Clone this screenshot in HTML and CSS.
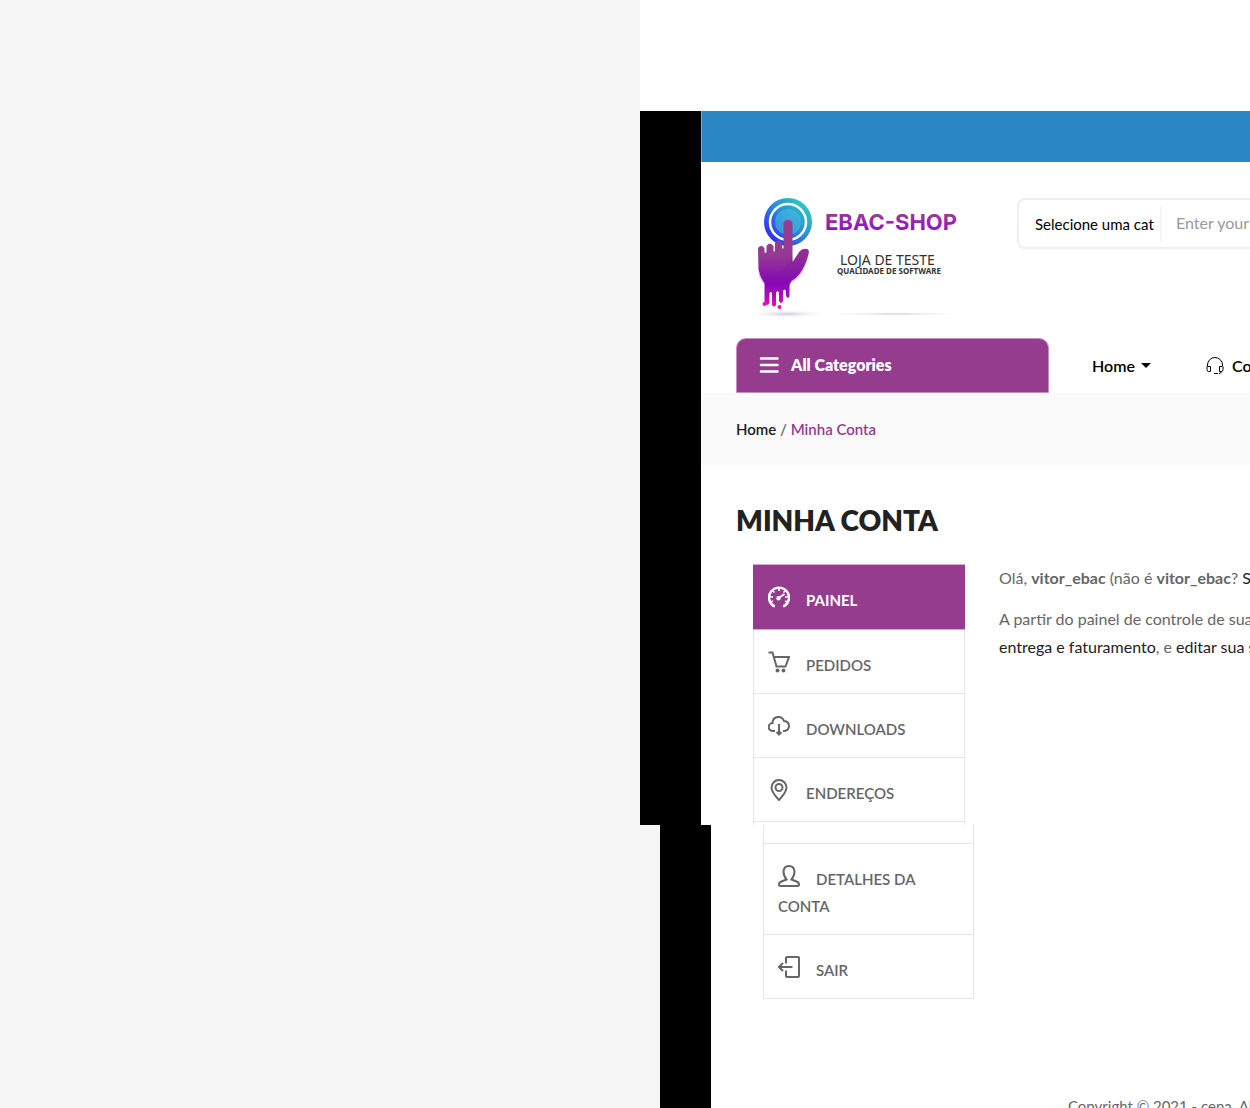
FILE: index.html
```html
<!DOCTYPE html>
<html lang="pt-BR">
<head>
<meta charset="utf-8">
<meta name="viewport" content="width=device-width, initial-scale=1">
<title>Minha Conta - EBAC Shop</title>
<link rel="stylesheet" href="styles.css">
</head>
<body>
<div class="page">
  <section class="band band-upper">
    <div class="shop">
      <div class="topbar"></div>
      <header class="header">
        <a class="logo" href="#" aria-label="EBAC-SHOP">
          <svg width="224" height="130" viewBox="0 0 224 130">
            <defs>
              <linearGradient id="ring" x1="1" y1="0" x2="0" y2="1"><stop offset="0" stop-color="#2fe0b8"/><stop offset=".5" stop-color="#2a86dc"/><stop offset="1" stop-color="#3a08ff"/></linearGradient>
              <linearGradient id="hand" x1="0" y1="25" x2="0" y2="113" gradientUnits="userSpaceOnUse"><stop offset="0" stop-color="#963c90"/><stop offset=".4" stop-color="#943a92"/><stop offset=".72" stop-color="#8a06bb"/><stop offset=".85" stop-color="#a50fbc"/><stop offset="1" stop-color="#ef0fae"/></linearGradient>
              <linearGradient id="word" x1="0" y1="0" x2="0" y2="1"><stop offset=".2" stop-color="#963e90"/><stop offset=".8" stop-color="#9a0cd0"/></linearGradient>
              <radialGradient id="shade"><stop offset="0" stop-color="#c9c9e0"/><stop offset="1" stop-color="#fff" stop-opacity="0"/></radialGradient>
            </defs>
            <ellipse cx="42" cy="119" rx="42" ry="4" fill="url(#shade)"/>
            <ellipse cx="150" cy="119" rx="74" ry="2" fill="url(#shade)"/>
            <circle cx="43" cy="27" r="24" fill="url(#ring)"/>
            <circle cx="43" cy="27" r="18" fill="none" stroke="#fff" stroke-width="2.500"/>
            <circle cx="43" cy="27" r="13" fill="#46bcdc" opacity=".6"/>
            <path fill="url(#hand)" d="M13 53q3-4 6.500 0v4q1 2 2 0v-6q3-5 7 0v5q1 1 1.500 0v-8q3.500-5 7 0v5q1 1 1.500 0V29q0-4 4.500-4t4.500 4v38l6-9q3-5 9-4 2 1 1 5-3 12-9 20-4 5-8 7-2 2-2 6v9q-1.500 4-3.500 0v-5q-1.500-3-3 0v10q-2 4-4 0v-8q-1.500-4-3 0v12q-2 3-4 0v-12q-1.500-2-2.500 0v10q-3 4-5 0V88q-4-5-6-13z"/>
            <path d="M47 60q-2 10-11 16-9 5-23 2 1 5 5 10 11 5 26 2l3-3q6-2 11-11 5-9 6-20-4-4-10 2l-6 9z" fill="#7b129a" opacity=".25"/>
            <circle cx="19.500" cy="109" r="2" fill="#ef0fae"/><circle cx="34.500" cy="112" r="2" fill="#ef0fae"/>
            <text class="logo-name" x="80" y="35" fill="url(#word)">EBAC-SHOP</text>
            <text class="logo-line" x="95" y="70">LOJA DE TESTE</text>
            <text class="logo-sub" x="92" y="79">QUALIDADE DE SOFTWARE</text>
          </svg>
        </a>
        <form class="search">
          <select class="search-category" aria-label="Categoria"><option>Selecione uma cat</option></select>
          <input class="search-text" type="text" placeholder="Enter your search" aria-label="Busca">
        </form>
      </header>
      <nav class="nav">
        <button class="categories" type="button">
          <svg width="20" height="16" viewBox="0 0 20 16" stroke="#fff" stroke-width="2.500" stroke-linecap="round"><path d="M2 1.500h16.500M2 8h16.500M2 14.500h16.500"/></svg>
          All Categories
        </button>
        <a class="nav-link" href="#">Home <span class="caret"></span></a>
        <a class="nav-link nav-contact" href="#">
          <svg width="18" height="18" viewBox="0 0 18 18" fill="none" stroke="#000"><path d="M1.500 9V8a7 7 0 0 1 15 0v1M1.500 9.500h3v5h-2q-1.500 0-1.500-2v-3zM16.500 9.500h-3v5h2q1.500 0 1.500-2v-3M15.500 14.500q-.5 2-2.500 2M8 16.500h4"/></svg>
          Contact
        </a>
      </nav>
      <div class="breadcrumb"><a href="#">Home</a> / <span class="current">Minha Conta</span></div>
      <main class="account">
        <h1>MINHA CONTA</h1>
        <div class="columns">
          <ul class="menu menu-upper">
            <li><a class="active" href="#"><svg class="icon" viewBox="0 0 22 22"><path d="M7 20H5.500A10 10 0 1 1 16.500 20H15" stroke-width="2.400"/><path d="M11 2v3M5 5l1.500 1.500M2 11h3M17 5l-1.500 1.500M20 11h-3M3 16l2-1M19 16l-2-1" stroke-width="1.600"/><path d="M10.500 12l6-4"/><circle cx="10.500" cy="12.200" r="1.200"/></svg>PAINEL</a></li>
            <li><a href="#"><svg class="icon" viewBox="0 0 22 22"><path d="M.5 1.500h4l4 14h9L21 6H6"/><circle cx="9.500" cy="19.500" r="1"/><circle cx="15.500" cy="19.500" r="1"/></svg>PEDIDOS</a></li>
            <li><a href="#"><svg class="icon" viewBox="0 0 22 22"><path d="M7 16H5a4 4 0 0 1-.5-8q0-5 5-6 5-.5 6.500 4 5 .5 5 5t-5 5h-1M11 9v10M8.500 17l2.500 2.500 2.500-2.500"/></svg>DOWNLOADS</a></li>
            <li><a href="#"><svg class="icon" viewBox="0 0 22 22"><path d="M11 21Q3.500 13 3.500 8.500a7.500 7.500 0 0 1 15 0Q18.500 13 11 21z"/><circle cx="11" cy="8.500" r="3.500"/></svg>ENDEREÇOS</a></li>
          </ul>
          <div class="welcome">
            <p>Olá, <strong>vitor_ebac</strong> (não é <strong>vitor_ebac</strong>? <a href="#">Sair</a>)</p>
            <p>A partir do painel de controle de sua conta<br><a href="#">entrega e faturamento</a>, e <a href="#">editar sua senha</a></p>
          </div>
        </div>
      </main>
    </div>
  </section>
  <section class="band band-lower">
    <div class="shop">
      <ul class="menu menu-lower">
        <li><a href="#"><svg class="icon" viewBox="0 0 22 22"><path d="M8.500 14.500Q5.500 11 5.500 6.500 6 1 11 1t5.500 5.500q0 4.500-3 8l5 2q2.500 1 2.500 3 0 1.500-1.500 1.500h-17Q1 21 1 19.500q0-2 2.500-3z"/></svg>DETALHES DA CONTA</a></li>
        <li><a href="#"><svg class="icon" viewBox="0 0 22 22"><path d="M8 7.500V2q0-1 1-1h11q1 0 1 1v18q0 1-1 1H9q-1 0-1-1v-5.500M14.500 11H1.500M5 7l-4 4 4 4"/></svg>SAIR</a></li>
      </ul>
      <footer class="footer">Copyright © 2021 - cena. All rights reserved.</footer>
    </div>
  </section>
</div>
</body>
</html>
```

FILE: styles.css
```css
* {
  box-sizing: border-box;
}

body {
  margin: 0;
  background: #f6f6f6;
  color: #666;
  font: 16px/28px Lato, "Liberation Sans", sans-serif;
}

a {
  color: #222;
  text-decoration: none;
}

.page {
  display: flex;
  flex-direction: column;
  height: 100vh;
  overflow: hidden;
}

.band {
  flex: none;
  display: flex;
}

.band-upper {
  margin-left: 640px;
  padding-top: 111px;
  background: #fff;
}

.band-lower {
  margin-left: 660px;
}

.shop {
  flex: 1;
  min-width: 0;
  overflow: hidden;
  border-left: 61px solid #000;
  background: #fff;
}

.band-lower .shop {
  border-left-width: 51px;
}

.topbar {
  height: 51px;
  border-left: 1px solid #a5a5a5;
  background: #2a86c4;
}

.header {
  display: flex;
  align-items: flex-start;
  gap: 48px;
  padding: 33px 0 13px 44px;
}

.logo,
.logo svg {
  display: block;
  flex: none;
}

.logo-name {
  font: 700 22px Inter, sans-serif;
}

.logo-line {
  fill: #333;
  font: 14px "Noto Sans", sans-serif;
}

.logo-sub {
  fill: #333;
  font: 700 8px "Noto Sans", sans-serif;
}

.search {
  flex: none;
  display: flex;
  align-items: center;
  width: 600px;
  height: 51px;
  margin-top: 3px;
  border: 2px solid #eee;
  border-radius: 8px;
}

.search-category,
.search-text {
  appearance: none;
  height: 36px;
  border: 0;
  background: none;
  font: 16px Lato, sans-serif;
}

.search-category {
  width: 143px;
  padding: 0 0 0 16px;
  border-right: 2px solid #f5f5f5;
  color: #000;
  font-size: 15px;
}

.search-text {
  flex: 1;
  padding: 0 14px 2px;
}

.search-text::placeholder {
  color: #999;
}

.nav {
  display: flex;
  align-items: center;
  padding-left: 35px;
  white-space: nowrap;
}

.categories {
  flex: none;
  display: flex;
  align-items: center;
  gap: 12px;
  width: 313px;
  height: 55px;
  margin-right: 43px;
  padding: 0 22px 2px;
  border: 1px solid #c48dc1;
  border-radius: 10px 10px 0 0;
  background: #963c8f;
  color: #fff;
  font: 800 16px Lato, sans-serif;
}

.nav-link {
  display: flex;
  align-items: center;
  gap: 6px;
  margin-right: 55px;
  color: #000;
  font-weight: 600;
}

.nav-contact {
  gap: 8px;
}

.caret {
  border: 5px solid transparent;
  border-top-color: #000;
  border-bottom: 0;
}

.breadcrumb {
  margin: 0 0 0 1px;
  padding: 23px 34px 22px;
  background: #fafafa;
  font-size: 15px;
  font-weight: 600;
  line-height: 27px;
}

.current {
  color: #963c8f;
}

.account {
  padding: 36px 0 0 35px;
}

h1 {
  margin: 0 0 24px;
  color: #222;
  font-size: 28px;
  font-weight: 800;
  line-height: 39px;
}

.columns {
  display: flex;
  gap: 34px;
  padding-left: 17px;
}

.menu {
  flex: none;
  width: 212px;
  margin: 0;
  padding: 0;
  border: solid #e5e5e5;
  border-width: 0 1px;
  list-style: none;
  font-size: 15px;
  font-weight: 600;
  line-height: 27px;
}

.menu a {
  display: block;
  padding: 21px 14px 14px;
  border-bottom: 1px solid #e5e5e5;
  color: #666;
}

.menu .active {
  margin: 0 -1px;
  padding: 21px 15px 15px;
  border: 1px solid #d3a9d1;
  border-width: 1px 0;
  background: #963c8f;
  color: #fff;
  font-weight: 700;
}

.menu-upper {
  padding-bottom: 3px;
}

.menu-lower {
  width: 211px;
  margin-left: 52px;
  padding-top: 18px;
}

.menu-lower li:first-child {
  border-top: 1px solid #e5e5e5;
}

.icon {
  width: 22px;
  height: 22px;
  margin-right: 16px;
  fill: none;
  stroke: currentColor;
  stroke-width: 2;
  vertical-align: -2px;
}

.welcome {
  white-space: nowrap;
}

.welcome p {
  margin: 0 0 13px;
}

.footer {
  padding: 93px 0 40px 357px;
  font-size: 15px;
  white-space: nowrap;
}
```
